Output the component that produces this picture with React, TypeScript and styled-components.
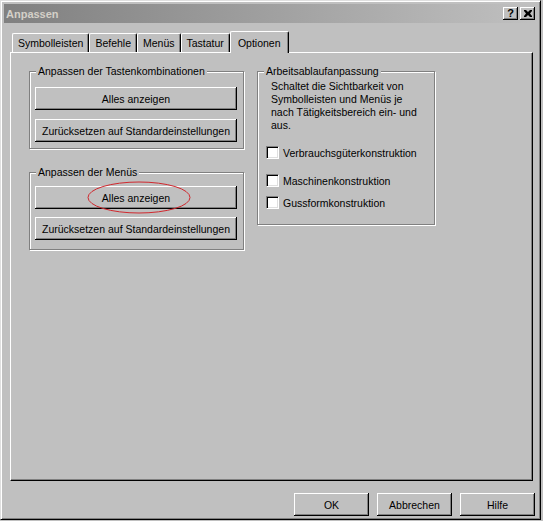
import React from "react";
import styled, { createGlobalStyle } from "styled-components";

const Global = createGlobalStyle`
  html, body {
    margin: 0;
    padding: 0;
    background: #c0c0c0;
  }
  body {
    font-family: "Liberation Sans", Arial, sans-serif;
    font-size: 10.5px;
    color: #000;
  }
`;

const Window = styled.div`
  width: 541px;
  height: 520px;
  box-sizing: border-box;
  background: #c0c0c0;
  border: 1px solid;
  border-color: #dfdfdf #000 #000 #dfdfdf;
  box-shadow: inset 1px 1px 0 #fff, inset -1px -1px 0 #808080;
  padding: 3px;
  display: flex;
  flex-direction: column;
`;

const TitleBar = styled.div`
  height: 19px;
  flex: none;
  display: flex;
  align-items: center;
  padding: 0 2px;
  background: linear-gradient(to right, #808080, #c0c0c0);
`;

const Title = styled.span`
  flex: 1;
  font-weight: bold;
  font-size: 11px;
  color: #d4d0c8;
`;

const CaptionBtn = styled.div<{ $gap?: number }>`
  width: 15px;
  height: 13px;
  box-sizing: border-box;
  margin-left: ${(p) => p.$gap ?? 0}px;
  background: #c0c0c0;
  box-shadow: inset -1px -1px 0 #000, inset 1px 1px 0 #fff, inset -2px -2px 0 #808080;
  display: flex;
  align-items: center;
  justify-content: center;
  font-weight: bold;
  font-size: 11px;
  line-height: 1;
`;

const TabRow = styled.div`
  display: flex;
  align-items: flex-end;
  height: 21px;
  margin-top: 8px;
  padding-left: 8px;
  flex: none;
`;

const Tab = styled.div<{ $active?: boolean }>`
  position: relative;
  z-index: ${(p) => (p.$active ? 2 : 1)};
  height: ${(p) => (p.$active ? 22 : 19)}px;
  margin-bottom: ${(p) => (p.$active ? -1 : 0)}px;
  padding: 0 ${(p) => (p.$active ? 7 : 5)}px;
  box-sizing: border-box;
  display: flex;
  align-items: center;
  background: #c0c0c0;
  border-top: 1px solid #fff;
  border-left: 1px solid #fff;
  border-right: 1px solid #000;
  border-radius: 2px 2px 0 0;
  box-shadow: inset -1px 0 0 #808080;
  white-space: nowrap;
`;

const Panel = styled.div`
  flex: 1;
  margin: 0 4px 0 6px;
  background: #c0c0c0;
  border: 1px solid;
  border-color: #fff #000 #000 #fff;
  box-shadow: inset -1px -1px 0 #808080;
  padding: 18px 0 0 18px;
  display: flex;
  gap: 13px;
  align-items: flex-start;
`;

const Column = styled.div`
  display: flex;
  flex-direction: column;
`;

const Group = styled.div<{ $w: number; $pad: string; $mt?: number }>`
  position: relative;
  width: ${(p) => p.$w}px;
  box-sizing: border-box;
  margin-top: ${(p) => p.$mt ?? 0}px;
  border: 1px solid #808080;
  box-shadow: inset 1px 1px 0 #fff, 1px 1px 0 #fff;
  padding: ${(p) => p.$pad};
  display: flex;
  flex-direction: column;
`;

const Legend = styled.span`
  position: absolute;
  top: -7px;
  left: 6px;
  padding: 0 2px;
  line-height: 13px;
  background: #c0c0c0;
  white-space: nowrap;
`;

const Button = styled.div<{ $w: number; $mt?: number }>`
  position: relative;
  width: ${(p) => p.$w}px;
  height: 23px;
  margin-top: ${(p) => p.$mt ?? 0}px;
  box-sizing: border-box;
  background: #c0c0c0;
  box-shadow: inset -1px -1px 0 #000, inset 1px 1px 0 #fff, inset -2px -2px 0 #808080;
  display: flex;
  align-items: center;
  justify-content: center;
  white-space: nowrap;
  flex: none;
`;

const Mark = styled.svg`
  position: absolute;
  left: 53px;
  top: -4px;
  overflow: visible;
`;

const Info = styled.div`
  padding-left: 5px;
  line-height: 13px;
`;

const CheckRow = styled.label<{ $mt: number }>`
  display: flex;
  align-items: center;
  margin-top: ${(p) => p.$mt}px;
  height: 13px;
  white-space: nowrap;
`;

const Box = styled.span`
  width: 13px;
  height: 13px;
  box-sizing: border-box;
  background: #fff;
  border: 1px solid;
  border-color: #808080 #fff #fff #808080;
  box-shadow: inset 1px 1px 0 #000, inset -1px -1px 0 #dfdfdf;
  margin-right: 4px;
  flex: none;
`;

const Footer = styled.div`
  flex: none;
  display: flex;
  justify-content: flex-end;
  gap: 8px;
  margin: 12px 2px 0 0;
`;

const checks = [
  { label: "Verbrauchsgüterkonstruktion", mt: 14 },
  { label: "Maschinenkonstruktion", mt: 15 },
  { label: "Gussformkonstruktion", mt: 9 },
];

const tabs = ["Symbolleisten", "Befehle", "Menüs", "Tastatur", "Optionen"];

export default function App() {
  return (
    <>
      <Global />
      <Window>
        <TitleBar>
          <Title>Anpassen</Title>
          <CaptionBtn>?</CaptionBtn>
          <CaptionBtn $gap={2}>
            <svg width="8" height="7" viewBox="0 0 8 7">
              <path d="M0 0h2l2 2 2-2h2v1L6 3.5 8 6v1H6L4 5 2 7H0V6l2-2.5L0 1z" fill="#000" />
            </svg>
          </CaptionBtn>
        </TitleBar>
        <TabRow>
          {tabs.map((t) => (
            <Tab key={t} $active={t === "Optionen"}>
              {t}
            </Tab>
          ))}
        </TabRow>
        <Panel>
          <Column>
            <Group $w={215} $pad="15px 0 6px 5px">
              <Legend>Anpassen der Tastenkombinationen</Legend>
              <Button $w={202}>Alles anzeigen</Button>
              <Button $w={202} $mt={9}>
                Zurücksetzen auf Standardeinstellungen
              </Button>
            </Group>
            <Group $w={215} $pad="13px 0 9px 5px" $mt={23}>
              <Legend>Anpassen der Menüs</Legend>
              <Button $w={202}>
                Alles anzeigen
                <Mark width="102" height="31">
                  <ellipse cx="51" cy="15.5" rx="51" ry="15.5" fill="none" stroke="#d0282e" strokeWidth="1" />
                </Mark>
              </Button>
              <Button $w={202} $mt={8}>
                Zurücksetzen auf Standardeinstellungen
              </Button>
            </Group>
          </Column>
          <Group $w={178} $pad="8px 0 15px 8px">
            <Legend>Arbeitsablaufanpassung</Legend>
            <Info>
              Schaltet die Sichtbarkeit von
              <br />
              Symbolleisten und Menüs je
              <br />
              nach Tätigkeitsbereich ein- und
              <br />
              aus.
            </Info>
            {checks.map((c) => (
              <CheckRow key={c.label} $mt={c.mt}>
                <Box />
                {c.label}
              </CheckRow>
            ))}
          </Group>
        </Panel>
        <Footer>
          <Button $w={75}>OK</Button>
          <Button $w={75}>Abbrechen</Button>
          <Button $w={75}>Hilfe</Button>
        </Footer>
      </Window>
    </>
  );
}
